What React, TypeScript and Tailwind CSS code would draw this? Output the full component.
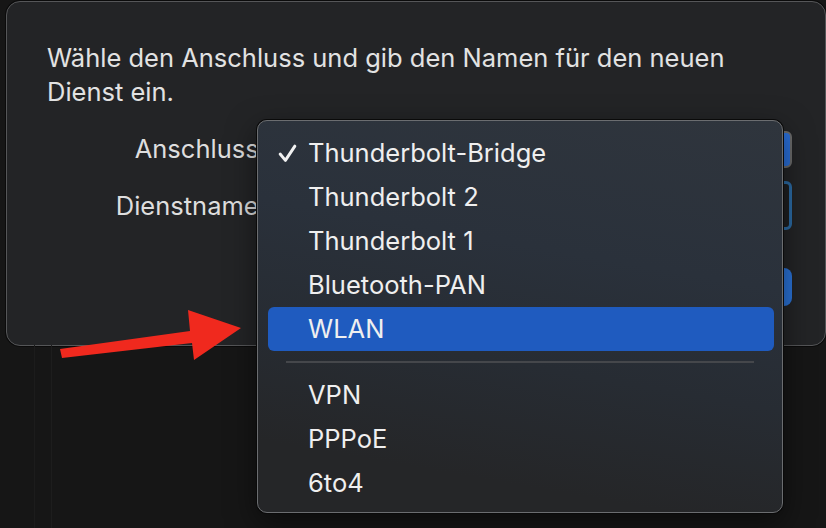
import React from 'react'

const items = ['Thunderbolt-Bridge', 'Thunderbolt 2', 'Thunderbolt 1', 'Bluetooth-PAN', 'WLAN']
const extras = ['VPN', 'PPPoE', '6to4']

const MenuItem = ({ label, checked, active }: { label: string; checked?: boolean; active?: boolean }) => {
  return (
    <div className="h-11 pl-[10px] pr-[8px] flex items-center">
      <div
        className={
          active
            ? 'w-full h-11 rounded-md bg-[#1f5bbf] flex items-center'
            : 'w-full h-11 flex items-center'
        }
      >
        <div className="w-[40px] pl-[9px] flex items-center">
          {checked && (
            <svg width="21" height="21" viewBox="0 0 20 20" fill="none">
              <path
                d="M3 10.5 L8 16.5 L17 3"
                stroke="#f2f2f2"
                strokeWidth="2.8"
                strokeLinecap="round"
                strokeLinejoin="round"
              />
            </svg>
          )}
        </div>
        <span className="text-[25.5px] leading-none text-[#efefef]">{label}</span>
      </div>
    </div>
  )
}

const App = () => {
  return (
    <div className="relative w-[826px] h-[528px] overflow-hidden bg-[#161616] font-['Inter',sans-serif]">
      <div className="absolute left-[34px] top-[345px] bottom-0 w-px bg-[#1c1c1c]" />
      <div className="absolute left-[51px] top-[345px] bottom-0 w-px bg-[#1d1d1d]" />

      {/* dialog sheet */}
      <div className="ml-[6px] mt-px w-[820px] h-[345px] rounded-[14px] border border-[#555658] bg-[#232426] shadow-[0_0_0_1px_#0b0b0b]">
        <p className="ml-[40px] pt-[39px] w-[710px] text-[25.5px] leading-[34px] text-[#e2e2e2]">
          Wähle den Anschluss und gib den Namen für den neuen Dienst ein.
        </p>

        <div className="mt-[21px] grid grid-cols-[259px_1fr] gap-x-2 gap-y-[13px] pr-[33px] items-center text-[25.5px] text-[#dedede]">
          <span className="text-right">Anschluss:</span>
          <div className="h-[37px] rounded-md border-2 border-[#6a6a6a] bg-[#2a6fd8]" />
          <span className="text-right">Dienstname:</span>
          <div className="h-[49px] rounded-md border-[3px] border-[#2b6aa3] bg-[#1e1f21]" />
        </div>

        <div className="mt-[38px] flex justify-end pr-[33px]">
          <div className="w-[120px] h-[38px] rounded-lg bg-[#2a72d6]" />
        </div>
      </div>

      {/* popup menu */}
      <div className="absolute left-[257px] top-[120px] w-[526px] h-[393px] rounded-[10px] border border-[#6b6d70] shadow-[0_0_0_1px_#0a0a0a,0_10px_30px_rgba(0,0,0,0.5)] bg-[linear-gradient(190deg,#2f353d_0%,#2a313b_35%,#272c33_60%,#252628_85%)] pt-[10px]">
        {items.map((label, i) => (
          <MenuItem key={label} label={label} checked={i === 0} active={label === 'WLAN'} />
        ))}
        <div className="h-[22px] flex items-center px-[28px]">
          <div className="w-full h-[2px] bg-[#45474b]" />
        </div>
        {extras.map((label) => (
          <MenuItem key={label} label={label} />
        ))}
      </div>

      {/* annotation arrow */}
      <svg className="absolute left-0 top-0" width="826" height="528" viewBox="0 0 826 528">
        <polygon
          points="60,349 190,331 188,310 241,328 194,360 192,343 62,358"
          fill="#f0291e"
        />
      </svg>
    </div>
  )
}

export default App
